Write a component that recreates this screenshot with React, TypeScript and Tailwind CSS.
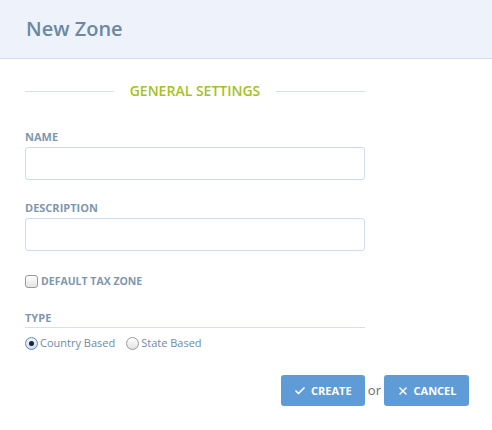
import { Check, X } from "lucide-react";

function Label({ children }: { children: React.ReactNode }) {
  return (
    <div className="text-[11px] font-bold uppercase leading-[14px] text-[#7f97ae]">
      {children}
    </div>
  );
}

function Radio({ checked, label }: { checked?: boolean; label: string }) {
  return (
    <label className="flex items-center gap-[2px]">
      <span
        className={
          "flex h-[13px] w-[13px] items-center justify-center rounded-full border " +
          (checked
            ? "border-[#5b8cc4] bg-gradient-to-b from-[#eef4fc] to-[#cfe0f4]"
            : "border-[#9a9a9a] bg-gradient-to-b from-white to-[#e2e2e2]")
        }
      >
        {checked && <span className="h-[5px] w-[5px] rounded-full bg-[#222]" />}
      </span>
      <span className="text-[11px] text-[#6f8aa6]">{label}</span>
    </label>
  );
}

export default function App() {
  return (
    <div
      className="h-[430px] w-[492px] bg-white"
      style={{ fontFamily: '"Open Sans", sans-serif' }}
    >
      <div className="flex h-[59px] items-center border-b border-[#d3e0f0] bg-[#eef3fb] px-[26px]">
        <h1 className="text-[20px] font-semibold text-[#6c88a2]">New Zone</h1>
      </div>

      <div className="w-[340px] pl-[25px] box-content">
        <div className="mt-[22px] flex items-center gap-[16px]">
          <div className="h-px flex-1 bg-[#d3e0f0]" />
          <span className="text-[14px] font-semibold leading-[20px] text-[#a5c126]">
            GENERAL SETTINGS
          </span>
          <div className="h-px flex-1 bg-[#d3e0f0]" />
        </div>

        <div className="mt-[29px]">
          <Label>Name</Label>
          <input className="mt-[3px] h-[33px] w-full rounded-[3px] border border-[#cbdcee] outline-none" />
        </div>

        <div className="mt-[21px]">
          <Label>Description</Label>
          <input className="mt-[3px] h-[33px] w-full rounded-[3px] border border-[#cbdcee] outline-none" />
        </div>

        <label className="mt-[23px] flex items-center gap-[3px]">
          <span className="h-[13px] w-[13px] rounded-[3px] border border-[#9a9a9a] bg-gradient-to-b from-white to-[#e4e4e4]" />
          <span className="text-[10.5px] font-bold text-[#7f97ae]">DEFAULT TAX ZONE</span>
        </label>

        <div className="mt-[21px] border-b border-[#d3e0f0] pb-[2px]">
          <Label>Type</Label>
        </div>
        <div className="mt-[7px] flex items-center gap-[11px]">
          <Radio checked label="Country Based" />
          <Radio label="State Based" />
        </div>
      </div>

      <div className="mt-[24px] flex items-center justify-end pr-[23px]">
        <button className="flex h-[31px] w-[84px] items-center justify-center gap-[5px] rounded-[3px] bg-[#5f9bd6] text-[11px] font-bold text-white">
          <Check size={12} strokeWidth={3.5} />
          CREATE
        </button>
        <span className="mx-[3px] text-[13px] text-[#6a6a6a]">or</span>
        <button className="flex h-[31px] w-[85px] items-center justify-center gap-[5px] rounded-[3px] bg-[#5f9bd6] text-[11px] font-bold text-white">
          <X size={12} strokeWidth={3} />
          CANCEL
        </button>
      </div>
    </div>
  );
}
